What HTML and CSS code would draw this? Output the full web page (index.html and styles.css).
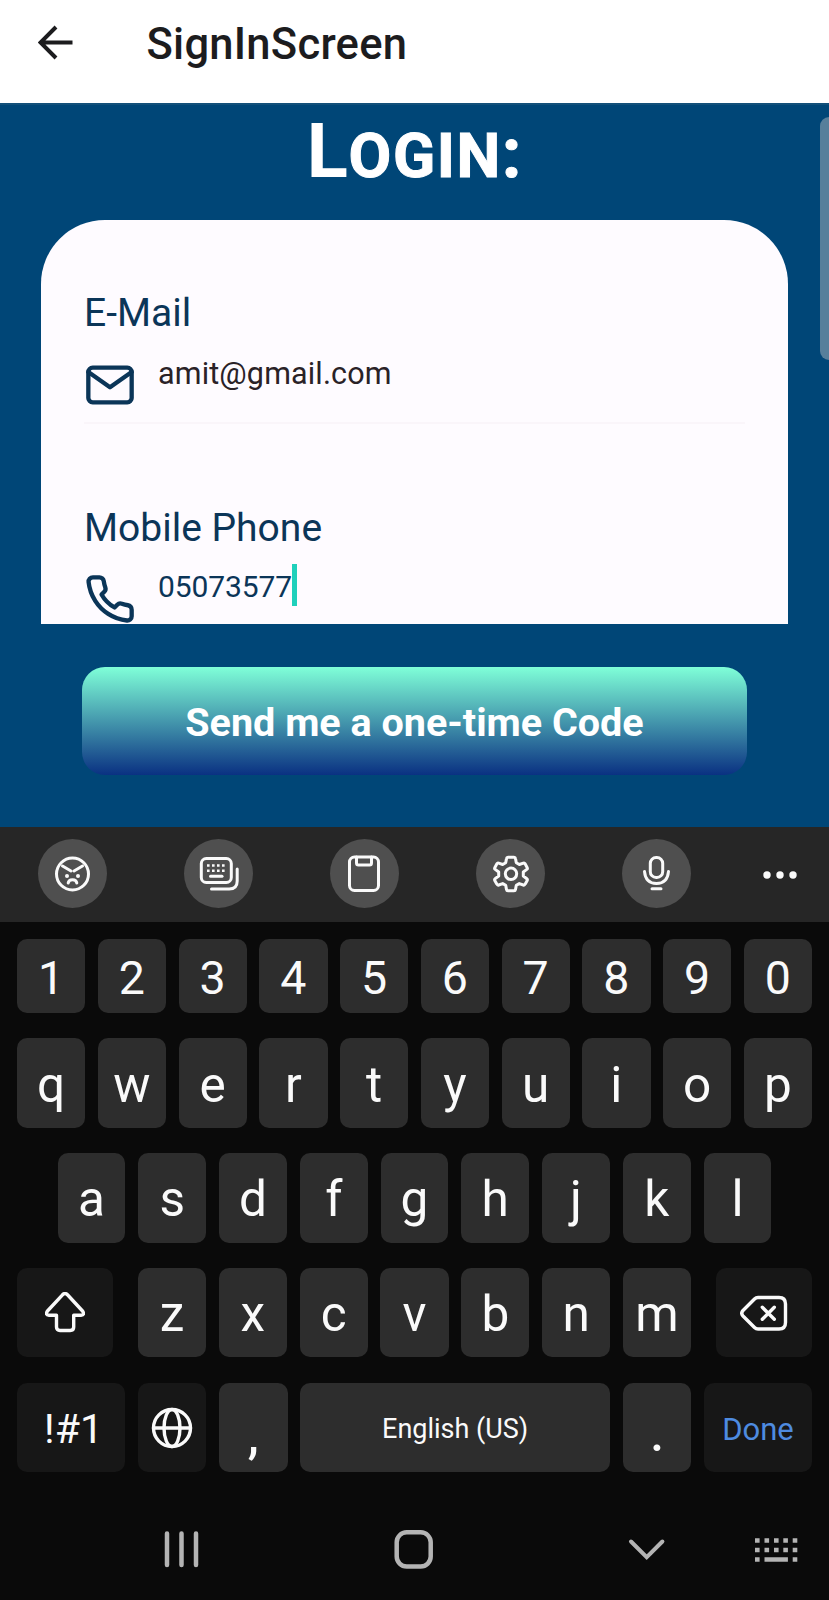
FILE: index.html
```html
<!DOCTYPE html>
<html lang="en">
<head>
<meta charset="utf-8">
<title>SignInScreen</title>
<link rel="stylesheet" href="styles.css">
</head>
<body>
<header class="appbar">
  <svg class="back" width="36" height="36" viewBox="0 0 36 36"><path d="M34.500 17.500H3M18 2L2.500 17.500L18 33"/></svg>
  <span class="title">SignInScreen</span>
</header>
<main class="screen">
  <h1 class="login">L<span class="small">OGIN</span><span class="colon">:</span></h1>
  <section class="card">
    <div class="label">E-Mail</div>
    <div class="field">
      <svg class="ficon" width="52" height="52" viewBox="0 0 24 24"><rect x="2" y="4" width="20" height="16" rx="2"/><path d="M22 6l-10 7L2 6"/></svg>
      <span class="value email">amit@gmail.com</span>
    </div>
    <div class="label phone-label">Mobile Phone</div>
    <div class="field phone">
      <svg class="ficon" width="52" height="52" viewBox="0 0 24 24"><path d="M22 16.920v3a2 2 0 0 1-2.180 2 19.790 19.790 0 0 1-8.630-3.070 19.500 19.500 0 0 1-6-6 19.790 19.790 0 0 1-3.070-8.670A2 2 0 0 1 4.110 2h3a2 2 0 0 1 2 1.720c.127.960.361 1.903.700 2.810a2 2 0 0 1-.450 2.110L8.090 9.910a16 16 0 0 0 6 6l1.270-1.270a2 2 0 0 1 2.110-.450c.907.339 1.850.573 2.810.700A2 2 0 0 1 22 16.920z"/></svg>
      <span class="value number">05073577</span><i class="caret"></i>
    </div>
  </section>
  <button class="send">Send me a one-time Code</button>
  <i class="scrollbar"></i>
</main>
<section class="keyboard">
  <div class="tools">
    <span class="tool"><svg width="40" height="40" viewBox="0 0 40 40"><circle cx="19.500" cy="20" r="16"/><path d="M9.500 12l8.500 5M29.500 12l-8.500 5M15.200 29c.5-4.500 8.100-4.500 8.600 0"/><circle class="fill" cx="14" cy="22" r="2"/><circle class="fill" cx="25" cy="22" r="2"/></svg></span>
    <span class="tool"><svg width="40" height="40" viewBox="0 0 40 40"><rect x="2.300" y="4.500" width="30" height="24" rx="5"/><path d="M38.200 15v12q0 8-8 8H12.500"/><path d="M11.500 22.200h11.500"/><path class="dots" d="M8 11.500h2.600M13 11.500h2.600M18 11.500h2.600M23 11.500h2.600M8 16.700h2.600M13 16.700h2.600M18 16.700h2.600M23 16.700h2.600"/></svg></span>
    <span class="tool"><svg width="40" height="40" viewBox="0 0 40 40"><rect x="4.500" y="3" width="29" height="33.500" rx="5"/><path d="M11.500 3v6q0 2 2 2h11q2 0 2-2V3"/></svg></span>
    <span class="tool"><svg width="40" height="40" viewBox="0 0 40 40"><path d="M17 3.300h6q1.300 0 1.500 1.300l.8 4.200 3 1.700 4-1.400q1.200-.4 1.800.7l2 3.600q.7 1.200-.3 2L32.300 18v4l3.500 2.700q1 .8.300 2l-2 3.500q-.6 1.200-1.800.8l-4-1.400-3 1.700-.8 4.200q-.2 1.300-1.500 1.300h-6q-1.300 0-1.500-1.300l-.8-4.200-3-1.700-4 1.400q-1.200.4-1.800-.8l-2-3.500q-.7-1.200.3-2L7.700 22v-4l-3.500-2.600q-1-.8-.3-2l2-3.600q.6-1.100 1.800-.7l4 1.400 3-1.700.8-4.200q.2-1.300 1.500-1.300z"/><circle cx="20" cy="19.800" r="5.700"/></svg></span>
    <span class="tool"><svg width="40" height="40" viewBox="0 0 40 40"><rect x="13.300" y="3.500" width="12.400" height="20" rx="5.800"/><path d="M7.500 17.500q1 12 12 12t12-12M15 34.800h9"/></svg></span>
    <svg class="more" width="34" height="8" viewBox="0 0 34 8"><circle cx="4" cy="4" r="3.700"/><circle cx="17" cy="4" r="3.700"/><circle cx="30" cy="4" r="3.700"/></svg>
  </div>
  <div class="row digits"><b>1</b><b>2</b><b>3</b><b>4</b><b>5</b><b>6</b><b>7</b><b>8</b><b>9</b><b>0</b></div>
  <div class="row"><b>q</b><b>w</b><b>e</b><b>r</b><b>t</b><b>y</b><b>u</b><b>i</b><b>o</b><b>p</b></div>
  <div class="row inset"><b>a</b><b>s</b><b>d</b><b>f</b><b>g</b><b>h</b><b>j</b><b>k</b><b>l</b></div>
  <div class="row">
    <b class="dark shift"><svg width="40" height="42" viewBox="0 0 40 42"><path d="M17.500 2.800q2.500-2.600 5 0L37.500 19q2.700 4-1.500 4.200h-7.300V35q0 3.500-3.500 3.500H15q-3.500 0-3.500-3.500V23.200H4Q-.2 23 2.500 19z"/></svg></b>
    <b>z</b><b>x</b><b>c</b><b>v</b><b>b</b><b>n</b><b>m</b>
    <b class="dark erase"><svg width="48" height="38" viewBox="0 0 48 38"><path d="M18 2.500h21q6.500 0 6.500 6.500v18.500q0 6.500-6.500 6.500H18q-2 0-3.500-1.500L3 21q-2.500-2.700 0-5.500L14.500 4Q16 2.500 18 2.500z"/><path d="M22.300 12.300l12 12M34.300 12.300l-12 12"/></svg></b>
  </div>
  <div class="row last">
    <b class="dark wide sym">!#1</b>
    <b class="dark globe"><svg width="42" height="42" viewBox="0 0 42 42"><circle cx="21" cy="21" r="18.500"/><ellipse cx="21" cy="21" rx="8" ry="18.500"/><path d="M2.500 21h37"/></svg></b>
    <b class="punct">,</b>
    <b class="space">English (US)</b>
    <b class="punct dot">.</b>
    <b class="dark wide done">Done</b>
  </div>
  <nav class="nav">
    <svg width="829" height="128" viewBox="0 1472 829 128">
      <path class="recents" d="M167 1533.500v31.500M181.500 1533.500v31.500M196 1533.500v31.500"/>
      <rect class="home" x="396.700" y="1532.300" width="34" height="34.300" rx="10"/>
      <path class="chev" d="M631 1541.500l15.700 15.700 15.700-15.700"/>
      <path class="kb" d="M755 1540.500h4.600M764.500 1540.500h4.600M774 1540.500h4.600M783.300 1540.500h4.600M792.700 1540.500h4.600M755 1550h4.600M764.500 1550h4.600M774 1550h4.600M783.300 1550h4.600M792.700 1550h4.600M755 1559.500h4.600M764.500 1559.500h23.400M792.700 1559.500h4.600"/>
    </svg>
  </nav>
</section>
</body>
</html>
```
FILE: styles.css
```css
* { box-sizing: border-box; }
body { margin: 0; width: 829px; height: 1600px; overflow: hidden; background: #0a0a0a; font-family: Roboto, sans-serif; }
svg { display: block; flex: none; fill: none; stroke-linecap: round; stroke-linejoin: round; }

.appbar { height: 103px; background: #fff; display: flex; align-items: flex-start; padding: 25px 0 0 38px; gap: 72.500px; }
.back { stroke: #1c1c1e; stroke-width: 4; stroke-linecap: butt; stroke-linejoin: miter; }
.title { font-size: 43.500px; font-weight: 500; line-height: 50px; margin-top: -5px; color: #1c1c1e; letter-spacing: .25px; white-space: nowrap; }

.screen { position: relative; height: 724px; background: #004677; border-top: 2px solid #12507a; display: flex; flex-direction: column; align-items: center; }
.login { margin: 0; height: 115px; padding-top: 1px; font-size: 76px; font-weight: 700; line-height: 90px; color: #fff; letter-spacing: .7px; white-space: nowrap; }
.small { font-size: 62px; letter-spacing: 1.600px; -webkit-text-stroke: 1px #fff; }
.colon { font-size: 70px; -webkit-text-stroke: 1px #fff; }
.card { width: 747px; height: 404px; overflow: hidden; background: #fefbff; border-radius: 64px 64px 0 0; padding: 70px 43px 0; }
.label { font-size: 39px; line-height: 46px; color: #0b3558; white-space: nowrap; }
.field { display: flex; height: 88px; padding-top: 23px; border-bottom: 2px solid #faf5fa; }
.ficon { stroke: #0b3558; stroke-width: 2; }
.value { font-size: 30px; line-height: 36px; margin: -4px 0 0 22px; color: #2a2227; white-space: nowrap; }
.email { font-size: 30.500px; letter-spacing: .15px; margin-top: -3px; }
.phone-label { margin-top: 81px; }
.phone { padding-top: 22px; }
.number { color: #0b3558; letter-spacing: -.1px; }
.caret { width: 5px; height: 42px; margin: -9px 0 0 -.5px; background: #1fd0bb; }
.send { width: 665px; height: 108px; margin: 43px 0 0; padding: 3px 0 0; border: 0; border-radius: 23px; background: linear-gradient(#7fffd8, #0a3182); color: #fff; font: 700 39.500px/46px Roboto, sans-serif; white-space: nowrap; }
.scrollbar { position: absolute; right: 0; top: 12px; width: 9px; height: 243px; background: #577f9b; border-radius: 9px 0 0 9px; }

.keyboard { background: #0a0a0a; }
.tools { height: 95px; background: #262626; display: flex; align-items: flex-start; padding: 12px 0 0 37.500px; gap: 77px; }
.tool { width: 69px; height: 69px; flex: none; padding-left: 1px; border-radius: 50%; background: #4f4f4f; display: flex; align-items: center; justify-content: center; }
.tool svg { stroke: #fafafa; stroke-width: 3; }
.tool .fill { fill: #fafafa; stroke: none; }
.tool .dots { stroke-linecap: butt; stroke-width: 2.600; }
.more { fill: #fafafa; margin: 31.500px 0 0 -4.800px; }

.row { display: flex; gap: 12.500px; height: 89.500px; margin: 25.300px 17px 0; }
.row b { flex: 1 1 0; min-width: 0; display: flex; align-items: center; justify-content: center; padding-top: 3px; border-radius: 10px; background: #2d2d2d; color: #fafafa; font-size: 49.500px; font-weight: 400; line-height: 60px; white-space: nowrap; }
.row.digits { height: 74px; margin-top: 17px; }
.row.digits b { font-size: 46.500px; padding-top: 3px; }
.row.inset { padding: 0 40.700px; gap: 13px; }
.row b.dark { background: #171717; }
.row b svg { stroke: #fafafa; stroke-width: 3.400; }
.row b.shift { flex: 0 0 96.400px; margin-right: 12px; padding: 1px 0 0; }
.row b.erase { flex: 0 0 96.400px; margin-left: 12px; padding: 2px 0 0; }
.row b.wide { flex: 0 0 108px; }
.row b.space { flex: 0 0 310px; font-size: 27px; padding-top: 3px; }
.row b.sym { font-size: 41px; padding: 3px 0 0 5px; }
.row b.globe { padding: 1px 0 0; }
.row b.punct { padding-top: 18px; font-weight: 500; }
.row b.dot { padding-top: 14px; }
.row b.done { font-size: 31px; padding-top: 5px; color: #4e8be0; }

.nav { height: 128px; }
.nav svg { stroke: #b4b4b4; }
.recents { stroke-width: 4.500; }
.home { stroke-width: 4.500; }
.chev { stroke-width: 4; stroke-linejoin: miter; }
.kb { stroke-width: 4.600; stroke-linecap: butt; }
```
